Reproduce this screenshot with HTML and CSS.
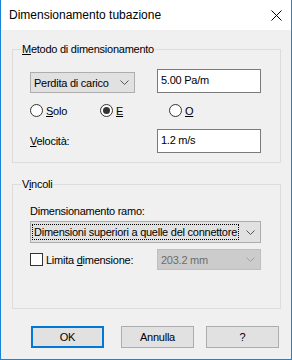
FILE: index.html
```html
<!DOCTYPE html>
<html lang="it">
<head>
<meta charset="utf-8">
<title>Dimensionamento tubazione</title>
<link rel="stylesheet" href="styles.css">
</head>
<body>
<div class="window">
  <div class="titlebar">
    <span class="title">Dimensionamento tubazione</span>
    <svg class="close" width="11" height="11" viewBox="0 0 11 11"><path d="M0.5 0.5L10.5 10.5M10.5 0.5L0.5 10.5" stroke="#000" stroke-width="1"/></svg>
  </div>
  <div class="content">
    <fieldset class="group g1">
      <legend><u>M</u>etodo di dimensionamento</legend>
      <div class="row r1">
        <div class="combo c1"><span class="ctext">Perdita di carico</span><svg class="chev" width="9" height="5" viewBox="0 0 9 5"><path d="M0.5 0.5L4.5 4.5L8.5 0.5" fill="none" stroke="#555" stroke-width="1"/></svg></div>
        <div class="edit">5.00 Pa/m</div>
      </div>
      <div class="row radios">
        <label class="radio r-solo"><span class="circle"></span><span><u>S</u>olo</span></label>
        <label class="radio r-e"><span class="circle on"></span><span><u>E</u></span></label>
        <label class="radio r-o"><span class="circle"></span><span><u>O</u></span></label>
      </div>
      <div class="row r3">
        <span class="lbl"><u>V</u>elocità:</span>
        <div class="edit">1.2 m/s</div>
      </div>
    </fieldset>
    <fieldset class="group g2">
      <legend>V<u>i</u>ncoli</legend>
      <div class="lbl ramo">Dimensionamento ramo:</div>
      <div class="combo c2"><span class="ctext focus">Dimensioni superiori a quelle del connettore</span><svg class="chev" width="9" height="5" viewBox="0 0 9 5"><path d="M0.5 0.5L4.5 4.5L8.5 0.5" fill="none" stroke="#555" stroke-width="1"/></svg></div>
      <div class="row r5">
        <label class="check"><span class="box"></span><span>Limita <u>d</u>imensione:</span></label>
        <div class="combo c3 disabled"><span class="ctext">203.2 mm</span><svg class="chev" width="9" height="5" viewBox="0 0 9 5"><path d="M0.5 0.5L4.5 4.5L8.5 0.5" fill="none" stroke="#a0a0a0" stroke-width="1"/></svg></div>
      </div>
    </fieldset>
    <div class="buttons">
      <button class="btn ok">OK</button>
      <button class="btn cancel">Annulla</button>
      <button class="btn help">?</button>
    </div>
  </div>
</div>
</body>
</html>
```
FILE: styles.css
```css
* { box-sizing: border-box; }
html, body { margin: 0; padding: 0; background: #f0f0f0; }
body {
  font-family: "Liberation Sans", Arial, sans-serif;
  font-size: 11px; letter-spacing: -0.25px; color: #000;
}
.window {
  width: 292px; height: 360px;
  background: #f0f0f0;
  border-left: 1px solid #1883d7;
  border-right: 1px solid #1883d7;
  border-bottom: 1px solid #1883d7;
}
.titlebar {
  height: 30px; background: #fff;
  display: flex; align-items: center; justify-content: space-between;
  padding: 0 9px 0 8px;
}
.title { font-size: 12px; letter-spacing: 0; color: #000; }
.close { display: block; }
.content { padding: 11px 10px 0 11px; }
.group {
  margin: 0; padding: 0 8px;
  border: 1px solid #dcdcdc;
  min-width: 0;
}
.group legend { padding: 0 1px; line-height: 16px; color: #000; }
.g1 { padding-top: 12px; padding-bottom: 9px; height: 122px; }
.g2 { margin-top: 13px; padding-top: 12px; height: 133px; }
.row { display: flex; margin-left: 9px; }
.r1 { align-items: flex-end; }
.combo {
  display: flex; align-items: center; justify-content: space-between;
  background: #e1e1e1; border: 1px solid #adadad;
  padding: 0 5px 0 3px; white-space: nowrap; overflow: hidden;
}
.ctext { line-height: 14px; }
.c1 { width: 105px; height: 21px; }
.edit {
  width: 104px; height: 24px; background: #fff; border: 1px solid #7a7a7a;
  padding: 4px 0 0 3px; margin-left: 22px; white-space: nowrap;
}
.radios { margin-top: 11px; height: 13px; align-items: center; }
.radio { display: flex; align-items: center; gap: 3px; }
.r-solo { width: 70px; }
.r-e { width: 69px; }
.circle {
  width: 13px; height: 13px; border: 1px solid #333; border-radius: 50%;
  background: #fff; display: flex; align-items: center; justify-content: center;
}
.circle.on::after { content: ""; width: 7px; height: 7px; border-radius: 50%; background: #333; }
.r3 { margin-top: 12px; align-items: center; }
.r3 .lbl { width: 105px; }
.ramo { margin-left: 9px; line-height: 15px; }
.c2 { margin: 2px 0 0 9px; width: 231px; height: 22px; padding-left: 2px; }
.ctext.focus { outline: 1px dotted #000; outline-offset: 0; padding: 0 1px; }
.r5 { margin-top: 6px; align-items: center; }
.check { display: flex; align-items: center; gap: 3px; width: 127px; }
.box { width: 13px; height: 13px; border: 1px solid #333; background: #fff; }
.c3 { width: 104px; height: 21px; background: #cccccc; border-color: #bfbfbf; color: #6d6d6d; }
.buttons { display: flex; margin-top: 17px; padding-left: 19px; }
.btn {
  width: 73px; height: 22px; margin: 0; padding: 0;
  background: #e1e1e1; border: 1px solid #adadad;
  font-family: "Liberation Sans", Arial, sans-serif; font-size: 11px;
  letter-spacing: -0.25px; color: #000;
}
.btn.ok { border: 2px solid #0078d7; }
.btn.cancel { margin-left: 17px; }
.btn.help { margin-left: 12px; }
```
